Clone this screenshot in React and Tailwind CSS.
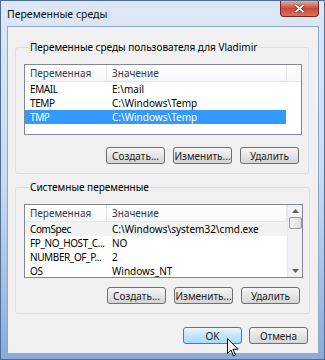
import React from 'react';

const btn =
  'h-[17px] w-[59px] rounded-[3px] border border-[#707070] bg-gradient-to-b from-[#f5f5f5] via-[#e6e6e6] to-[#d4d4d4] text-[10px] leading-none text-[#1e1e1e] flex items-center justify-center';

const userVars = [
  { name: 'EMAIL', value: 'E:\\mail' },
  { name: 'TEMP', value: 'C:\\Windows\\Temp' },
  { name: 'TMP', value: 'C:\\Windows\\Temp', selected: true },
];

const sysVars = [
  { name: 'ComSpec', value: 'C:\\Windows\\system32\\cmd.exe', hot: true },
  { name: 'FP_NO_HOST_C...', value: 'NO' },
  { name: 'NUMBER_OF_P...', value: '2' },
  { name: 'OS', value: 'Windows_NT' },
];

const Header = ({ filler }) => (
  <div className="h-[17px] flex border-b border-[#e5e5e5] bg-gradient-to-b from-white to-[#f7f8fa] text-[#2d3e52]">
    <div className="w-[82px] pl-[5px] flex items-center border-r border-[#e3e6ea]">Переменная</div>
    <div className="w-[180px] pl-[5px] flex items-center border-r border-[#e3e6ea]">Значение</div>
    {filler && <div className="flex-1" />}
  </div>
);

const Row = ({ v }) => (
  <div
    className={
      'h-[14px] flex items-center ' +
      (v.selected ? 'bg-[#3399ff] text-white mr-[15px]' : v.hot ? 'bg-[#f2f2f2]' : '')
    }
  >
    <div className="w-[82px] pl-[5px] whitespace-nowrap tracking-[-0.4px]">{v.name}</div>
    <div className="pl-[5px] whitespace-nowrap">{v.value}</div>
  </div>
);

const Group = ({ title, children }) => (
  <fieldset className="border border-[#d5dfe5] rounded-[3px] pl-[8px] pr-[6px] pt-[10px] pb-[9px]">
    <legend className="ml-[5px] px-[1px] h-[14px] leading-[14px] text-[10px]">{title}</legend>
    {children}
  </fieldset>
);

const Buttons = ({ top }) => (
  <div className={'mr-[3px] flex justify-end gap-[8px] ' + top}>
    <button className={btn}>Создать...</button>
    <button className={btn}>Изменить...</button>
    <button className={btn}>Удалить</button>
  </div>
);

export default function App() {
  return (
    <div className="relative w-[325px] h-[360px] overflow-hidden flex flex-col bg-gradient-to-b from-[#dde8f4] via-[#c9dbef] to-[#8aabd9] border border-[#4f6d95] font-['Noto_Sans',sans-serif] text-[10px] text-black">
      {/* title bar */}
      <div className="h-[25px] flex items-start justify-between">
        <span className="pl-[6px] pt-[6px] text-[10.5px] leading-[14px] text-[#111]">Переменные среды</span>
        <div className="mr-[5px] w-[39px] h-[16px] rounded-b-[4px] border border-t-0 border-[#6e2a24] bg-gradient-to-b from-[#e9a99c] via-[#c8473b] to-[#d9735f] flex items-center justify-center">
          <svg width="11" height="9" viewBox="0 0 11 9">
            <path d="M1.5 1 L9.5 8 M9.5 1 L1.5 8" stroke="#5a1a14" strokeWidth="3" />
            <path d="M1.5 1 L9.5 8 M9.5 1 L1.5 8" stroke="#fff" strokeWidth="1.8" />
          </svg>
        </div>
      </div>

      {/* client area */}
      <div className="ml-[6px] mr-[5px] mb-[5px] flex-1 bg-[#f0f0f0] border border-[#8ea8cc] pl-[7px] pr-[9px] flex flex-col">
        <div className="mt-[13px]">
          <Group title="Переменные среды пользователя для Vladimir">
            <div className="h-[71px] border border-[#828790] bg-white">
              <Header filler />
              {userVars.map((v) => (
                <Row key={v.name} v={v} />
              ))}
            </div>
            <Buttons top="mt-[12px]" />
          </Group>
        </div>

        <div className="mt-[6px]">
          <Group title="Системные переменные">
            <div className="h-[74px] border border-[#828790] bg-white flex">
              <div className="flex-1 overflow-hidden">
                <Header />
                {sysVars.map((v) => (
                  <Row key={v.name} v={v} />
                ))}
              </div>
              <div className="w-[15px] bg-[#f2f2f2] border-l border-[#e8e8e8] flex flex-col items-center">
                <div className="h-[12px] flex items-center justify-center">
                  <svg width="7" height="4" viewBox="0 0 7 4">
                    <path d="M0 4 L3.5 0 L7 4 Z" fill="#606060" />
                  </svg>
                </div>
                <div className="w-[13px] h-[12px] rounded-[2px] border border-[#979797] bg-gradient-to-r from-[#f3f3f3] to-[#dcdcdc]" />
                <div className="flex-1" />
                <div className="h-[12px] flex items-center justify-center">
                  <svg width="7" height="4" viewBox="0 0 7 4">
                    <path d="M0 0 L7 0 L3.5 4 Z" fill="#606060" />
                  </svg>
                </div>
              </div>
            </div>
            <Buttons top="mt-[9px]" />
          </Group>
        </div>

        <div className="mt-[13px] mr-[1px] flex justify-end gap-[7px]">
          <button className="h-[17px] w-[59px] rounded-[3px] border border-[#3c7fb1] bg-gradient-to-b from-[#eaf6fd] via-[#c4e5f8] to-[#a7d9f5] text-[10px] leading-none text-[#1e1e1e] flex items-center justify-center">
            OK
          </button>
          <button className={btn}>Отмена</button>
        </div>
      </div>

      {/* mouse pointer */}
      <svg className="absolute left-[226px] top-[337px]" width="12" height="19" viewBox="0 0 12 19">
        <path d="M0.5 0.5 L0.5 15.5 L4 12 L6.5 18 L8.5 17 L6 11.2 L11 11.2 Z" fill="#fff" stroke="#000" strokeWidth="1" strokeLinejoin="round" />
      </svg>
    </div>
  );
}
